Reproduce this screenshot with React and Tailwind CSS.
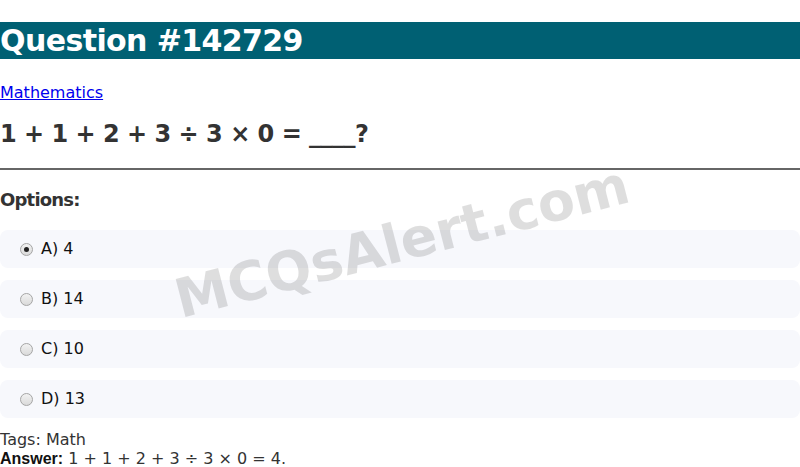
import { useState } from 'react';

const options = [
  { key: 'A', text: '4' },
  { key: 'B', text: '14' },
  { key: 'C', text: '10' },
  { key: 'D', text: '13' },
];

function Radio({ checked }) {
  return (
    <span className="w-[13px] h-[13px] rounded-full border border-[#a5a5a5] bg-gradient-to-b from-[#f2f2f2] to-[#dadada] flex items-center justify-center shrink-0">
      {checked && <span className="w-[5px] h-[5px] rounded-full bg-[#222]" />}
    </span>
  );
}

export default function App() {
  const [selected, setSelected] = useState('A');

  return (
    <div className="relative min-h-screen bg-white overflow-hidden font-['DejaVu_Sans',sans-serif] text-[#333]">
      {/* Title bar */}
      <h1 className="mt-[22px] h-[37px] bg-[#006073] text-white text-[30px] font-bold tracking-[-0.6px] leading-[37px] whitespace-nowrap">
        Question #142729
      </h1>

      <div className="pt-[22px]">
        <a href="#" className="text-[16px] leading-[19px] text-[#0000ee] underline">Mathematics</a>
      </div>

      <h2 className="mt-[15px] text-[24px] font-bold tracking-[-0.5px] leading-[28px] text-[#333]">
        1 + 1 + 2 + 3 ÷ 3 × 0 = ____?
      </h2>

      <hr className="mt-[20px] border-t-2 border-[#666]" />

      <h3 className="mt-[20px] text-[18px] font-bold tracking-[-0.8px] leading-[20px] text-[#333]">Options:</h3>

      <div className="mt-[20px] flex flex-col gap-[12px]">
        {options.map((o) => (
          <label
            key={o.key}
            onClick={() => setSelected(o.key)}
            className="h-[38px] rounded-[8px] bg-[#f7f8fc] flex items-center gap-[8px] pl-[20px] text-[16px] text-[#111] cursor-pointer"
          >
            <Radio checked={selected === o.key} />
            <span>{o.key}) {o.text}</span>
          </label>
        ))}
      </div>

      <div className="mt-[12px] text-[16px] leading-[19px] text-[#333]">Tags: Math</div>
      <div className="text-[16px] leading-[19px] text-[#333]">
        <b className="font-['Liberation_Sans',sans-serif] text-[#111]">Answer:</b> 1 + 1 + 2 + 3 ÷ 3 × 0 = 4.
      </div>

      {/* Watermark */}
      <div className="pointer-events-none absolute left-[402px] top-[242px] -translate-x-1/2 -translate-y-1/2 -rotate-[14.5deg] whitespace-nowrap text-[54px] font-bold text-[rgba(0,0,0,0.13)]">
        MCQsAlert.com
      </div>
    </div>
  );
}
